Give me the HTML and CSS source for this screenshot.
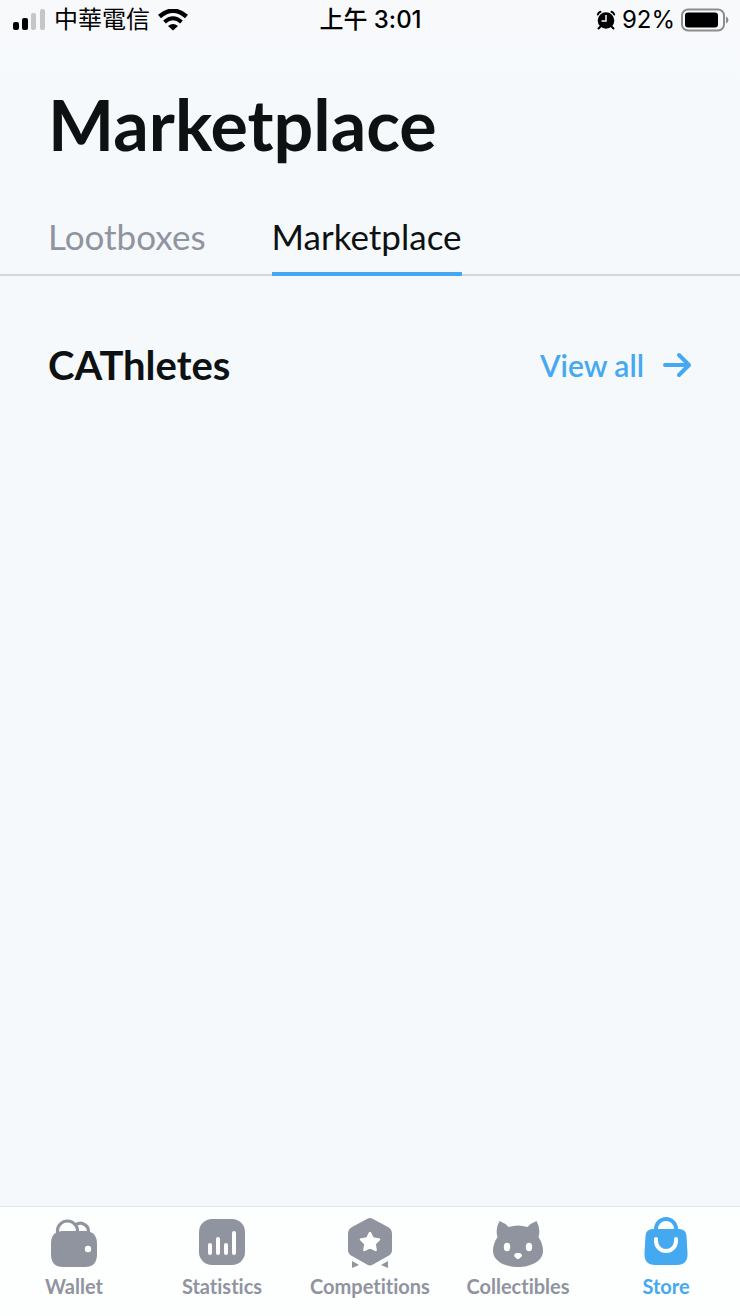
FILE: index.html
```html
<!DOCTYPE html>
<html lang="zh-Hant">
<head>
  <meta charset="UTF-8" />
  <meta name="viewport" content="width=device-width, initial-scale=1.0"/>
  <title>Marketplace</title>
  <link rel="stylesheet" href="styles.css">
</head>
<body>

<div class="status-bar">
  <div class="status-left">
    <svg class="signal" width="34" height="22" viewBox="0 0 34 22" aria-hidden="true">
      <rect x="1" y="13" width="6" height="8" rx="2"/>
      <rect x="10" y="9" width="6" height="12" rx="2"/>
      <rect class="off" x="19" y="4" width="5" height="17" rx="2"/>
      <rect class="off" x="28" y="0" width="5" height="21" rx="2"/>
    </svg>
    <span class="carrier">中華電信</span>
    <svg class="wifi" width="30" height="22" viewBox="0 0 30 22" aria-hidden="true">
      <path d="M1.500 7.500Q15-4 28.500 7.500" fill="none" stroke="#000" stroke-width="4.500"/>
      <path d="M6.500 13Q15 5.500 23.500 13" fill="none" stroke="#000" stroke-width="4"/>
      <path d="M10 17Q15 13 20 17L15 21.500Z"/>
    </svg>
  </div>
  <time class="clock">上午 3:01</time>
  <div class="status-right">
    <svg width="20" height="20" viewBox="0 0 20 20" aria-hidden="true">
      <circle cx="10" cy="10.500" r="8.300"/>
      <path d="M1.800 4.500Q2.500 2.500 4.500 1.800M15.500 1.800Q17.500 2.500 18.200 4.500M4.500 16.500L2.500 18.500M15.500 16.500L17.500 18.500" fill="none" stroke="#000" stroke-width="2" stroke-linecap="round"/>
      <path d="M10 5V11H5.500" fill="none" stroke="#f7f9fb" stroke-width="1.500"/>
    </svg>
    <span class="percent">92%</span>
    <svg width="48" height="24" viewBox="0 0 48 24" aria-hidden="true">
      <rect x="1" y="1.500" width="42" height="21" rx="6" fill="none" stroke="#8c8d8f" stroke-width="2"/>
      <rect x="4" y="4.500" width="33" height="15" rx="3"/>
      <path d="M45 8.500Q47.500 9.500 47.500 12T45 15.500Z" fill="#8c8d8f"/>
    </svg>
  </div>
</div>

<header>
  <h1>Marketplace</h1>
  <div class="tabs" role="tablist">
    <button type="button" class="tab" role="tab" aria-selected="false">Lootboxes</button>
    <button type="button" class="tab active" role="tab" aria-selected="true">Marketplace</button>
  </div>
</header>

<main>
  <section class="section-head">
    <h2>CAThletes</h2>
    <a href="#cathletes" class="view-all">
      View all
      <svg width="30" height="26" viewBox="0 0 30 26" aria-hidden="true">
        <path d="M3 13H27M17 3L27 13L17 23" fill="none" stroke="currentColor" stroke-width="4" stroke-linecap="round" stroke-linejoin="round"/>
      </svg>
    </a>
  </section>
</main>

<nav>
  <a href="#wallet">
    <svg width="52" height="52" viewBox="0 0 52 52" aria-hidden="true">
      <path d="M9.500 18V14A10 10 0 0 1 29.500 14V16M27 8.500A8 8 0 0 1 40.500 14V18" fill="none" stroke="currentColor" stroke-width="3.200"/>
      <path d="M14 14H38Q49 15 49 27V37Q49 50 37 50H15Q3 50 3 37V26Q3 15 14 14Z" fill="currentColor"/>
      <circle cx="40" cy="32" r="3.200" fill="#fff"/>
    </svg>
    Wallet
  </a>
  <a href="#statistics">
    <svg width="52" height="52" viewBox="0 0 52 52" aria-hidden="true">
      <rect x="3" y="2" width="46" height="46" rx="13" fill="currentColor"/>
      <path d="M14 28V36M22 22V36M30 28V36M38 16V36" stroke="#fff" stroke-width="4" stroke-linecap="round"/>
    </svg>
    Statistics
  </a>
  <a href="#competitions">
    <svg width="52" height="52" viewBox="0 0 52 52" aria-hidden="true">
      <path d="M23 2Q26 0 29 2L44 10Q48 12 48 17V33Q48 37 44 39L29 47.500Q26 49.500 23 47.500L8 39Q4 37 4 33V17Q4 12 8 10Z" fill="currentColor"/>
      <path d="M26 16L28.800 21.500L35 22.500L30.600 27L31.600 33L26 30.200L20.400 33L21.400 27L17 22.500L23.200 21.500Z" fill="#fff" stroke="#fff" stroke-width="2.500" stroke-linejoin="round"/>
      <path d="M8 44L15 48L8 51ZM44 44L37 48L44 51Z" fill="currentColor"/>
    </svg>
    Competitions
  </a>
  <a href="#collectibles">
    <svg width="52" height="52" viewBox="0 0 52 52" aria-hidden="true">
      <path d="M7.500 4Q13 6 16.500 10Q26 7 35.500 10Q39 6 44.500 4Q49 12 46.500 20Q51 27 51 34C51 44 39 50 26 50S1 44 1 34Q1 27 5.500 20Q3 12 7.500 4Z" fill="currentColor"/>
      <ellipse cx="15" cy="30" rx="3.200" ry="4.300" fill="#fff"/>
      <ellipse cx="37" cy="30" rx="3.200" ry="4.300" fill="#fff"/>
      <path d="M24 36H28Q31 38 29.500 39.500L27.500 41.500Q26 42.500 24.500 41.500L22.500 39.500Q21 38 24 36Z" fill="#fff"/>
    </svg>
    Collectibles
  </a>
  <a href="#store" class="current" aria-current="page">
    <svg width="52" height="52" viewBox="0 0 52 52" aria-hidden="true">
      <path d="M16 14V12A10 10 0 0 1 36 12V14" fill="none" stroke="currentColor" stroke-width="4"/>
      <path d="M13 12H39Q46 12 46.500 19L47.500 36Q48 48 37 48H15Q4 48 4.500 36L5.500 19Q6 12 13 12Z" fill="currentColor"/>
      <path d="M16 22V24A10 10 0 0 0 36 24V22" fill="none" stroke="#fff" stroke-width="4" stroke-linecap="round"/>
    </svg>
    Store
  </a>
</nav>

</body>
</html>
```

FILE: styles.css
```css
:root {
  --blue: #45a9f1;
  --text-dark: #0d1111;
  --text-muted: #90949f;
  --bg: #f5f9fc;
  --line: #cfd8de;
}

* {
  margin: 0;
  padding: 0;
  box-sizing: border-box;
}

body {
  min-height: 100vh;
  display: flex;
  flex-direction: column;
  background: linear-gradient(#f7f9fb, var(--bg) 200px);
  color: var(--text-dark);
  font-family: Lato, 'Noto Sans CJK TC', sans-serif;
  font-variant-ligatures: none;
}

svg {
  display: block;
  flex-shrink: 0;
}

/* status bar */
.status-bar {
  display: grid;
  grid-template-columns: 1fr auto 1fr;
  align-items: center;
  height: 40px;
  padding: 0 11px 0 12px;
  color: #000;
  font-family: 'Liberation Sans', 'Noto Sans CJK TC', sans-serif;
  font-size: 24px;
  line-height: 28px;
}

.status-left,
.status-right {
  display: flex;
  align-items: center;
}

.status-left {
  gap: 8px;
}

.status-right {
  justify-content: flex-end;
  gap: 6px;
}

.signal .off {
  fill: #c5c6c8;
}

.clock,
.percent {
  font-family: Inter, 'Noto Sans CJK TC', sans-serif;
}

.clock {
  font-weight: 500;
}

/* title and tabs */
h1 {
  padding: 40px 48px 0;
  font-size: 70px;
  font-weight: 700;
  line-height: 88px;
}

.tabs {
  display: flex;
  gap: 66px;
  margin-top: 40px;
  padding: 0 48px;
  box-shadow: inset 0 -2px var(--line);
}

.tab {
  height: 68px;
  padding-bottom: 8px;
  border: 0;
  border-bottom: 4px solid transparent;
  background: none;
  color: var(--text-muted);
  font: 400 35px Lato, sans-serif;
  cursor: pointer;
}

.tab.active {
  border-color: var(--blue);
  color: var(--text-dark);
}

/* content */
main {
  flex: 1;
  padding: 64px 48px;
}

.section-head {
  display: flex;
  justify-content: space-between;
  align-items: center;
}

h2 {
  font-size: 40px;
  font-weight: 700;
  line-height: 50px;
}

.view-all {
  display: flex;
  align-items: center;
  gap: 18px;
  color: var(--blue);
  font-size: 30px;
  font-weight: 600;
  line-height: 36px;
  text-decoration: none;
}

/* bottom navigation */
nav {
  display: grid;
  grid-template-columns: repeat(5, 1fr);
  padding: 10px 0 18px;
  border-top: 1px solid #e0e8ee;
  background: #fdfefe;
}

nav a {
  display: flex;
  flex-direction: column;
  align-items: center;
  gap: 5px;
  color: var(--text-muted);
  font-size: 20px;
  font-weight: 700;
  line-height: 24px;
  text-decoration: none;
}

nav .current {
  color: var(--blue);
}
```
